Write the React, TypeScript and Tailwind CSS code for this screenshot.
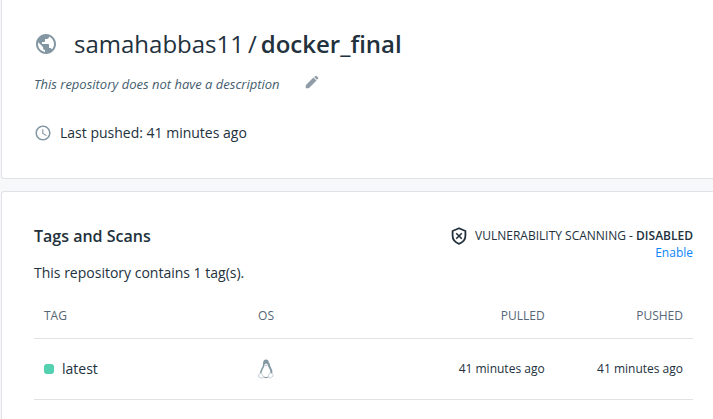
import React from "react";
import { MdPublic, MdAccessTime } from "react-icons/md";

type Tag = { name: string; pulled: string; pushed: string };

const tags: Tag[] = [
  { name: "latest", pulled: "41 minutes ago", pushed: "41 minutes ago" },
];

function PencilIcon() {
  return (
    <svg viewBox="0 0 16 16" className="h-4 w-4" fill="currentColor" aria-hidden="true">
      <path d="M2 11.2 V14 H4.8 L12.2 6.6 L9.4 3.8 Z" stroke="currentColor" strokeWidth="0.5" />
      <path d="M10.2 3 L11.5 1.9 Q12 1.5 12.5 1.9 L14.1 3.5 Q14.5 4 14.1 4.5 L13 5.8 Z" />
    </svg>
  );
}

function ShieldOffIcon() {
  return (
    <svg viewBox="0 0 16 18" className="h-[18px] w-4 shrink-0" fill="none" stroke="#22313c" aria-hidden="true">
      <path d="M8 1.2 L14.4 4 V8.8 C14.4 12.6 11.6 15.5 8 16.8 C4.4 15.5 1.6 12.6 1.6 8.8 V4 Z" strokeWidth="1.8" strokeLinejoin="round" />
      <path d="M5.2 6.2 L10.8 11.8 M10.8 6.2 L5.2 11.8" strokeWidth="1.6" />
    </svg>
  );
}

function LinuxIcon() {
  return (
    <svg viewBox="0 0 16 20" className="h-5 w-4" fill="none" role="img" aria-label="Linux">
      <path d="M5.2 3.6 C5.2 1.4 6.3 0.4 8 0.4 C9.8 0.4 10.9 1.5 10.9 3.8 L10.6 5.4 L8.2 4.4 L5.6 5.4 Z" fill="#8397a3" />
      <path d="M5.7 4 V6.4 C5.5 8.2 4 9.6 3.4 11.6 C3 12.8 2.6 13.6 2.6 14.4" stroke="#8397a3" strokeWidth="1.5" />
      <path d="M10.6 4 C10.5 7.4 12.4 8.8 13.2 11.6 C13.5 12.8 13.4 13.6 13.2 14.4" stroke="#8397a3" strokeWidth="2" />
      <path d="M6.4 5.8 L8 6.6 L9.8 5.6" stroke="#a9b7c0" strokeWidth="0.9" />
      <path d="M5.4 17.6 C6.8 18.6 9.4 18.6 10.8 17.6" stroke="#8397a3" strokeWidth="1.1" />
      <path d="M2.6 14.4 L0.8 15.4 L0.6 18 L4.4 19.3 L5.6 17.9 L3.8 14.6 Z M12.2 14 L10.8 15 L10.6 18.4 L12 19.3 L15.4 16.8 L14.2 14.6 Z" fill="#ffffff" stroke="#bcc7ce" strokeWidth="0.8" />
    </svg>
  );
}

export default function App() {
  return (
    <div className="flex min-h-screen flex-col gap-3 bg-[#f7f8fa] pl-px font-['Open_Sans','Noto_Sans',sans-serif] text-[#22313c]">
      <section className="rounded-bl-[3px] border-b border-l border-[#e0e2e5] bg-white pt-7 pr-5 pb-[35px] pl-8">
        <div className="flex h-8 items-center gap-4">
          <MdPublic className="h-6 w-6 text-[#8397a3]" aria-hidden="true" />
          <h1 className="flex items-center gap-1 text-2xl">
            <span>samahabbas11</span>
            <span>/</span>
            <span className="font-semibold">docker_final</span>
          </h1>
        </div>
        <div className="mt-3.5 flex items-start gap-6">
          <p className="text-[13px] leading-5 text-[#445d6e] italic">This repository does not have a description</p>
          <button type="button" aria-label="Edit description" className="text-[#8f9ba6]">
            <PencilIcon />
          </button>
        </div>
        <div className="mt-[29px] flex items-center gap-2">
          <MdAccessTime className="h-[18px] w-[18px] text-[#8397a3]" aria-hidden="true" />
          <p className="text-sm">Last pushed: 41 minutes ago</p>
        </div>
      </section>

      <section className="grow rounded-tl-[3px] border-t border-l border-[#e0e2e5] bg-white pt-8 pr-5 pl-8">
        <div className="flex items-start justify-between">
          <div>
            <h2 className="text-base font-semibold">Tags and Scans</h2>
            <p className="mt-[15px] text-sm">This repository contains 1 tag(s).</p>
          </div>
          <div className="mt-[3px] flex flex-col items-end text-xs">
            <div className="flex items-center gap-2">
              <ShieldOffIcon />
              <p>
                VULNERABILITY SCANNING - <span className="font-semibold">DISABLED</span>
              </p>
            </div>
            <a href="#enable" className="text-[#0c84f9]">Enable</a>
          </div>
        </div>
        <table className="mt-2 w-full table-fixed border-collapse text-xs">
          <thead>
            <tr className="h-[47px] border-b border-[#e0e2e5] text-[#556676]">
              <th scope="col" className="w-[34%] pt-1 pl-2.5 text-left font-normal">TAG</th>
              <th scope="col" className="pt-1 pr-2.5 text-left font-normal">OS</th>
              <th scope="col" className="pt-1 pr-2.5 text-right font-normal">PULLED</th>
              <th scope="col" className="w-[21%] pt-1 pr-2.5 text-right font-normal">PUSHED</th>
            </tr>
          </thead>
          <tbody>
            {tags.map((tag) => (
              <tr key={tag.name} className="h-[61px] border-b border-[#e0e2e5]">
                <td className="pl-2.5">
                  <div className="flex items-center gap-2 text-sm">
                    <span className="h-2.5 w-2.5 rounded-[3px] bg-[#52d0b0]" />
                    {tag.name}
                  </div>
                </td>
                <td><LinuxIcon /></td>
                <td className="pr-2.5 text-right">{tag.pulled}</td>
                <td className="pr-2.5 text-right">{tag.pushed}</td>
              </tr>
            ))}
          </tbody>
        </table>
      </section>
    </div>
  );
}
